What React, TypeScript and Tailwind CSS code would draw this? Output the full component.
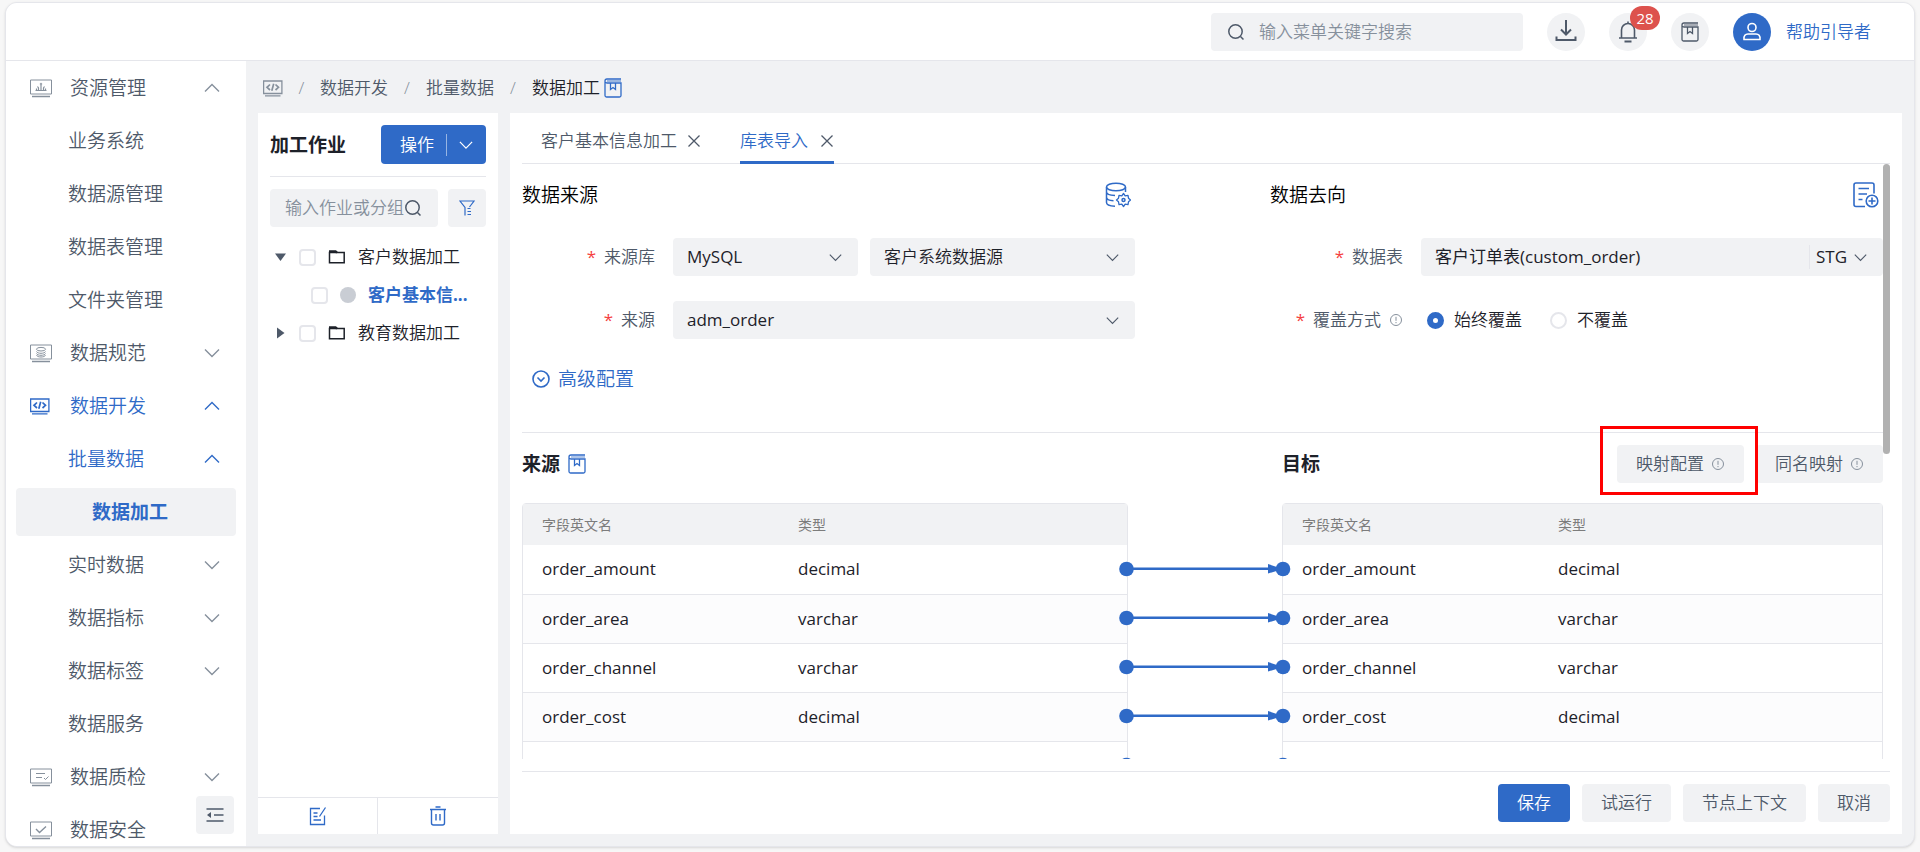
import type { ReactNode } from 'react';

const sidebarItems: {
  label: string;
  level: 1 | 2 | 3;
  icon?: ReactNode;
  arrow?: 'up' | 'down';
  active?: boolean;
}[] = [
  { label: '资源管理', level: 1, icon: <ResourceIcon />, arrow: 'up' },
  { label: '业务系统', level: 2 },
  { label: '数据源管理', level: 2 },
  { label: '数据表管理', level: 2 },
  { label: '文件夹管理', level: 2 },
  { label: '数据规范', level: 1, icon: <StandardIcon />, arrow: 'down' },
  { label: '数据开发', level: 1, icon: <CodeIcon />, arrow: 'up', active: true },
  { label: '批量数据', level: 2, arrow: 'up', active: true },
  { label: '数据加工', level: 3, active: true },
  { label: '实时数据', level: 2, arrow: 'down' },
  { label: '数据指标', level: 2, arrow: 'down' },
  { label: '数据标签', level: 2, arrow: 'down' },
  { label: '数据服务', level: 2 },
  { label: '数据质检', level: 1, icon: <QualityIcon />, arrow: 'down' },
  { label: '数据安全', level: 1, icon: <SecurityIcon /> },
];

const fields = [
  { name: 'order_amount', type: 'decimal' },
  { name: 'order_area', type: 'varchar' },
  { name: 'order_channel', type: 'varchar' },
  { name: 'order_cost', type: 'decimal' },
  { name: 'order_date', type: 'date' },
];

const levelPadding = { 1: 'pl-[14px]', 2: 'pl-[52px]', 3: 'pl-[76px]' };

function Monitor({ children }: { children: ReactNode }) {
  return (
    <svg width="22" height="19" viewBox="0 0 22 19" fill="none" stroke="currentColor" className="block">
      <path d="M.5 1h21v14H.5z" />
      <path d="M2 17.5h18" strokeWidth="1.5" />
      {children}
    </svg>
  );
}

function ResourceIcon() {
  return (
    <Monitor>
      <path d="M5.5 11.500h11M11 11V6M8.500 11V9L7.500 7.500M13.500 11V9l1-1.500M6.500 11V9.500M15.500 11V9.500" strokeWidth="1.2" />
      <circle cx="11" cy="5" r=".8" />
    </Monitor>
  );
}

function StandardIcon() {
  return (
    <Monitor>
      <ellipse cx="11" cy="5.2" rx="4.5" ry="1.8" />
      <path d="M6.5 7.5c1 2.4 8 2.4 9 0M6.5 9.5c1 2.4 8 2.4 9 0M6.5 11.2c1 2.4 8 2.4 9 0" />
    </Monitor>
  );
}

function CodeIcon() {
  return (
    <svg width="20" height="17" viewBox="0 0 20 17" fill="none" stroke="currentColor" className="block">
      <path d="M.6 1h18.3v12.5H.6zM2 15.8h15.5" strokeWidth="1.3" />
      <path d="M7 4.5 4 7.3 7 10M12.5 4.5l3 2.8-3 2.7M10.7 3.8 8.8 10.8" strokeWidth="1.7" />
    </svg>
  );
}

function QualityIcon() {
  return (
    <Monitor>
      <path d="M6 5.5h9M6 9.5h6M14 10l1.5 1.5 3-3" />
    </Monitor>
  );
}

function SecurityIcon() {
  return (
    <Monitor>
      <path d="m6 8 3.5 3.5 6.5-6" strokeWidth="1.4" />
    </Monitor>
  );
}

function Chevron({ up, size = 16 }: { up?: boolean; size?: number }) {
  return (
    <svg width={size} height={size} viewBox="0 0 16 16" fill="none" stroke="currentColor" strokeWidth="1.4" className="pointer-events-none block shrink-0">
      <path d={up ? 'm1 11.5 7-7 7 7' : 'm1 4.5 7 7 7-7'} />
    </svg>
  );
}

function SearchIcon() {
  return (
    <svg width="18" height="18" viewBox="0 0 18 18" fill="none" stroke="currentColor" strokeWidth="1.5" className="block shrink-0">
      <circle cx="8.5" cy="8.5" r="6.7" />
      <path d="m13.5 13.5 3 3" />
    </svg>
  );
}

function BookIcon() {
  return (
    <svg width="18" height="20" viewBox="0 0 18 20" fill="none" stroke="currentColor" strokeWidth="1.3" className="block shrink-0">
      <path d="M17 1H3a2 2 0 0 0-2 2v14.5A1.5 1.5 0 0 0 2.5 19h13a1.5 1.5 0 0 0 1.5-1.5V5H3a2 2 0 0 1-1.5-1" />
      <path d="M3 3h14" opacity=".6" />
      <path d="M6.5 5v6.5L9 9.5l2.5 2V5" />
    </svg>
  );
}

function InfoIcon() {
  return (
    <svg width="14" height="14" viewBox="0 0 14 14" fill="none" stroke="currentColor" className="block shrink-0 text-[#86909c]">
      <circle cx="7" cy="7" r="5.5" />
      <path d="M7 3.8v4M7 9v1.2" />
    </svg>
  );
}

function CloseIcon() {
  return (
    <svg width="14" height="14" viewBox="0 0 14 14" fill="none" stroke="currentColor" strokeWidth="1.3" className="block">
      <path d="m1.5 1.5 11 11M12.5 1.5l-11 11" />
    </svg>
  );
}

function FolderIcon() {
  return (
    <svg width="18" height="16" viewBox="0 0 18 16" fill="none" stroke="currentColor" strokeWidth="1.5" className="block shrink-0">
      <path d="M1.5 3.5h14.7v10.3H1.5z" />
      <path d="M1 2.5h6.5L9 3.5" strokeWidth="2.4" />
    </svg>
  );
}

function RoundButton({ label, children }: { label: string; children: ReactNode }) {
  return (
    <button type="button" aria-label={label} className="relative flex size-[38px] items-center justify-center rounded-full bg-[#f1f2f4]">
      {children}
    </button>
  );
}

function Header() {
  return (
    <header className="flex h-[58px] shrink-0 items-center justify-end gap-6 border-b border-[#e5e6eb] bg-white pr-[43px]">
      <label className="flex h-[38px] w-[312px] items-center gap-[14px] rounded bg-[#f1f2f4] px-4">
        <SearchIcon />
        <input type="text" aria-label="菜单搜索" placeholder="输入菜单关键字搜索" className="min-w-0 flex-1 bg-transparent outline-none placeholder:text-[#86909c]" />
      </label>
      <RoundButton label="下载">
        <svg width="22" height="24" viewBox="0 0 22 24" fill="none" stroke="currentColor" strokeWidth="2">
          <path d="M11 0v14M6 9.5l5 5 5-5M1.5 16.5V20h19v-3.5" />
        </svg>
      </RoundButton>
      <RoundButton label="通知">
        <svg width="20" height="22" viewBox="0 0 20 22" fill="none" stroke="currentColor" strokeWidth="1.6">
          <path d="M1 17h18M3.5 17V9a6.5 6.5 0 0 1 13 0v8M10 2.5V.5" />
          <path d="M6.5 20.5h7" strokeWidth="2" />
        </svg>
        <span className="absolute -top-[7px] left-[21px] flex h-6 w-[30px] items-center justify-center rounded-full bg-[#dd524d] text-[15px] font-normal text-white">28</span>
      </RoundButton>
      <RoundButton label="收藏">
        <BookIcon />
      </RoundButton>
      <div className="flex items-center gap-[15px] text-[#2f6ac7]">
        <span className="flex size-[38px] items-center justify-center rounded-full bg-[#2f6ac7] text-white">
          <svg width="20" height="20" viewBox="0 0 20 20" fill="none" stroke="currentColor" strokeWidth="1.6">
            <circle cx="10" cy="5.5" r="4" />
            <path d="M2 17.5c-.5-4 1.5-5.500 4-5.500h8c2.500 0 4.500 1.500 4 5.500z" />
          </svg>
        </span>
        <a href="#user">帮助引导者</a>
      </div>
    </header>
  );
}

function Sidebar() {
  return (
    <aside className="relative w-60 shrink-0 overflow-hidden bg-white px-[10px] pt-[3px] text-[19px]">
      <nav className="flex flex-col gap-[5px]">
        {sidebarItems.map((item) => (
          <a
            key={item.label}
            href="#menu"
            className={`flex h-12 shrink-0 items-center rounded pr-4 ${levelPadding[item.level]} ${
              item.active ? 'text-[#2f6ac7]' : ''
            } ${item.level === 3 ? 'bg-[#f1f2f4] font-bold' : ''}`}
          >
            {item.icon && <span className={`w-10 ${item.active ? '' : 'text-[#86909c]'}`}>{item.icon}</span>}
            <span className="flex-1">{item.label}</span>
            {item.arrow && (
              <span className={item.active ? '' : 'text-[#86909c]'}>
                <Chevron up={item.arrow === 'up'} />
              </span>
            )}
          </a>
        ))}
      </nav>
      <button type="button" aria-label="收起菜单" className="absolute right-3 bottom-3 flex size-[38px] items-center justify-center rounded bg-[#f1f2f4]">
        <svg width="18" height="16" viewBox="0 0 18 16" fill="none" stroke="currentColor" strokeWidth="1.6">
          <path d="M.5 2h17M8 8h9.5M.5 14h17" />
          <path d="M5 5v6L1 8z" fill="currentColor" stroke="none" />
        </svg>
      </button>
    </aside>
  );
}

function Breadcrumb() {
  return (
    <nav aria-label="面包屑" className="flex h-[52px] shrink-0 items-center pt-[2px] pl-[5px]">
      <span className="text-[#86909c]">
        <CodeIcon />
      </span>
      <span className="w-[37px] text-center text-[#86909c]">/</span>
      <a href="#dev">数据开发</a>
      <span className="w-[38px] text-center text-[#86909c]">/</span>
      <a href="#batch">批量数据</a>
      <span className="w-[38px] text-center text-[#86909c]">/</span>
      <span className="text-[#1d2129]">数据加工</span>
      <span className="ml-1 text-[#2f6ac7]">
        <BookIcon />
      </span>
    </nav>
  );
}

function TreeCheckbox({ label }: { label: string }) {
  return (
    <input type="checkbox" aria-label={label} className="size-[17px] shrink-0 appearance-none rounded border-2 border-[#e5e6eb] bg-white" />
  );
}

function JobPanel() {
  return (
    <section className="flex w-60 shrink-0 flex-col bg-white">
      <div className="px-3 pt-3">
        <div className="flex items-center justify-between border-b border-[#e5e6eb] pb-3">
          <h2 className="text-[19px] font-bold text-[#1d2129]">加工作业</h2>
          <button type="button" className="flex h-[39px] w-[105px] items-center rounded bg-[#2f6ac7] pl-[19px] text-white">
            操作
            <span className="ml-3 h-[22px] w-px bg-white/50" />
            <span className="ml-3">
              <Chevron size={14} />
            </span>
          </button>
        </div>
        <div className="mt-3 flex gap-[10px]">
          <label className="flex h-[38px] w-[168px] items-center rounded bg-[#f1f2f4] pr-4 pl-[15px]">
            <input type="text" aria-label="作业搜索" placeholder="输入作业或分组" className="min-w-0 flex-1 bg-transparent outline-none placeholder:text-[#86909c]" />
            <SearchIcon />
          </label>
          <button type="button" aria-label="筛选" className="flex size-[38px] items-center justify-center rounded bg-[#f1f2f4] text-[#2f6ac7]">
            <svg width="16" height="16" viewBox="0 0 16 16" fill="none" stroke="currentColor" strokeWidth="1.2">
              <path d="M6 15.5V7.5L1 1h14l-4.5 6" />
              <path d="M8.5 8.5h3M8.5 11.5h3.5M8.5 14.5h3.5" />
            </svg>
          </button>
        </div>
      </div>
      <ul className="mt-[11px] flex-1 text-[#1d2129]">
        <li className="flex h-[38px] items-center pl-[17px]">
          <svg width="11" height="8" viewBox="0 0 11 8" className="fill-[#4e5969]">
            <path d="M0 .5h11L5.5 8z" />
          </svg>
          <span className="ml-[13px] flex items-center gap-3">
            <TreeCheckbox label="客户数据加工" />
            <FolderIcon />
            客户数据加工
          </span>
        </li>
        <li className="flex h-[38px] items-center gap-3 pl-[53px]">
          <TreeCheckbox label="客户基本信息加工" />
          <span className="size-4 rounded-full bg-[#c9cdd4]" />
          <span className="font-bold text-[#2f6ac7]">客户基本信...</span>
        </li>
        <li className="flex h-[38px] items-center pl-[17px]">
          <svg width="11" height="12" viewBox="0 0 11 12" className="fill-[#4e5969]">
            <path d="M2 .5v11L9.5 6z" />
          </svg>
          <span className="ml-[13px] flex items-center gap-3">
            <TreeCheckbox label="教育数据加工" />
            <FolderIcon />
            教育数据加工
          </span>
        </li>
      </ul>
      <div className="grid h-[37px] shrink-0 grid-cols-2 divide-x divide-[#e5e6eb] border-t border-[#e5e6eb] text-[#2f6ac7]">
        <button type="button" aria-label="编辑" className="flex items-center justify-center">
          <svg width="18" height="20" viewBox="0 0 18 20" fill="none" stroke="currentColor" strokeWidth="1.3">
            <path d="M11 2.5H1.5v16h14V9.5M4.5 7h4M4.5 10.5h4M4.5 14h7.5M16.5 1.5l-6 9" />
          </svg>
        </button>
        <button type="button" aria-label="删除" className="flex items-center justify-center">
          <svg width="18" height="20" viewBox="0 0 18 20" fill="none" stroke="currentColor" strokeWidth="1.4">
            <path d="M1 3.5h16M6.5 1h5M2.5 3.5V17a2 2 0 0 0 2 2h9a2 2 0 0 0 2-2V3.5M7 8v6.5M11 8v6.5" />
          </svg>
        </button>
      </div>
    </section>
  );
}

function Select({ id, value, className }: { id: string; value: string; className: string }) {
  return (
    <div className={`relative flex items-center ${className}`}>
      <select id={id} aria-label={value} className="h-[38px] w-full appearance-none rounded bg-[#f1f2f4] pr-9 pl-[14px] text-[#1d2129] outline-none">
        <option>{value}</option>
      </select>
      <span className="pointer-events-none absolute right-4">
        <Chevron size={13} />
      </span>
    </div>
  );
}

function FormLabel({ htmlFor, children }: { htmlFor: string; children: ReactNode }) {
  return (
    <label htmlFor={htmlFor} className="flex w-[151px] shrink-0 items-center justify-end gap-2 pr-[18px]">
      <span className="font-normal text-[#f53f3f]">*</span>
      {children}
    </label>
  );
}

function Tabs() {
  return (
    <div className="flex h-[51px] shrink-0 items-stretch gap-[35px] border-b border-[#e5e6eb] pl-[19px]">
      <div className="flex items-center gap-[10px] pt-[5px]">
        <button type="button">客户基本信息加工</button>
        <button type="button" aria-label="关闭客户基本信息加工" className="mr-1">
          <CloseIcon />
        </button>
      </div>
      <div className="-mb-px flex items-center gap-3 border-b-[3px] border-[#2f6ac7] pt-2">
        <button type="button" className="text-[#2f6ac7]">库表导入</button>
        <button type="button" aria-label="关闭库表导入">
          <CloseIcon />
        </button>
      </div>
    </div>
  );
}

function SourceForm() {
  return (
    <div>
      <div className="flex h-[62px] items-center justify-between pr-1">
        <h3 className="text-[19px] text-black">数据来源</h3>
        <button type="button" aria-label="数据源配置" className="text-[#2f6ac7]">
          <svg width="26" height="26" viewBox="0 0 26 26" fill="none" stroke="currentColor" strokeWidth="1.5">
            <ellipse cx="11" cy="5" rx="9.5" ry="3.8" />
            <path d="M1.5 5v15.5c0 2 3.5 3.5 8.5 3.7M20.5 5v5M1.5 10c0 1.8 3.5 3.3 8.5 3.5M1.5 15.2c0 1.8 3 3.3 7 3.5" />
            <path
              d="m18.5 11.5 1.7 2.3 2.8-.4.5 2.8 2 1.8-2 1.8-.5 2.8-2.8-.4-1.7 2.300-1.7-2.300-2.8.4-.5-2.800-2-1.800 2-1.800.5-2.800 2.800.4z"
              strokeLinejoin="round"
              strokeWidth="1.3"
            />
            <circle cx="18.5" cy="18" r="1.5" />
          </svg>
        </button>
      </div>
      <div className="mt-3 flex flex-col gap-[25px]">
        <div className="flex">
          <FormLabel htmlFor="source-db">来源库</FormLabel>
          <Select id="source-db" value="MySQL" className="mr-3 w-[185px] font-normal" />
          <Select id="source-name" value="客户系统数据源" className="flex-1" />
        </div>
        <div className="flex">
          <FormLabel htmlFor="source-table">来源</FormLabel>
          <Select id="source-table" value="adm_order" className="flex-1 font-normal" />
        </div>
      </div>
      <button type="button" className="mt-7 ml-[10px] flex items-center gap-2 text-[19px] text-[#2f6ac7]">
        <svg width="18" height="18" viewBox="0 0 18 18" fill="none" stroke="currentColor" strokeWidth="1.6">
          <circle cx="9" cy="9" r="8" />
          <path d="m5.5 7.5 3.5 3.5 3.5-3.5" />
        </svg>
        高级配置
      </button>
    </div>
  );
}

function TargetForm() {
  return (
    <div>
      <div className="flex h-[62px] items-center justify-between pr-1">
        <h3 className="text-[19px] text-black">数据去向</h3>
        <button type="button" aria-label="新建数据表" className="text-[#2f6ac7]">
          <svg width="26" height="26" viewBox="0 0 26 26" fill="none" stroke="currentColor" strokeWidth="1.6">
            <path d="M21 11.5V3a2 2 0 0 0-2-2H3a2 2 0 0 0-2 2v19.5a2 2 0 0 0 2 2h9M5.5 6.5h10.5M5.5 12h8.5M5.5 17.5h4" />
            <circle cx="19" cy="19" r="5.8" />
            <path d="M19 15.5v7M15.5 19h7" />
          </svg>
        </button>
      </div>
      <div className="mt-3 flex flex-col gap-[25px]">
        <div className="flex">
          <FormLabel htmlFor="target-table">数据表</FormLabel>
          <div className="flex h-[38px] flex-1 items-center rounded bg-[#f1f2f4] font-normal text-[#1d2129]">
            <input id="target-table" type="text" defaultValue="客户订单表(custom_order)" className="min-w-0 flex-1 bg-transparent pl-[14px] outline-none" />
            <div className="relative flex w-[74px] items-center border-l border-[#e5e6eb]">
              <select aria-label="数据分层" className="w-full appearance-none bg-transparent pl-[6px] outline-none">
                <option>STG</option>
              </select>
              <span className="pointer-events-none absolute right-4 text-[#4e5969]">
                <Chevron size={13} />
              </span>
            </div>
          </div>
        </div>
        <div className="flex h-[38px]">
          <FormLabel htmlFor="cover-always">
            覆盖方式
            <InfoIcon />
          </FormLabel>
          <div className="flex items-center gap-7 pl-[6px] text-[#1d2129]">
            <label className="flex items-center gap-[10px]">
              <input id="cover-always" type="radio" name="cover" defaultChecked className="size-[17px] appearance-none rounded-full border-2 border-[#e5e6eb] bg-white checked:border-[6px] checked:border-[#2f6ac7]" />
              始终覆盖
            </label>
            <label className="flex items-center gap-[10px]">
              <input type="radio" name="cover" className="size-[17px] appearance-none rounded-full border-2 border-[#e5e6eb] bg-white checked:border-[6px] checked:border-[#2f6ac7]" />
              不覆盖
            </label>
          </div>
        </div>
      </div>
    </div>
  );
}

function FieldTable() {
  return (
    <div className="rounded-t border border-[#e5e6eb]">
      <table className="w-full table-fixed text-left font-normal text-[#1d2129]">
        <thead>
          <tr className="h-[41px] bg-[#f1f2f4] text-sm text-[#7c7c7c]">
            <th className="w-[256px] pl-[19px] font-normal">字段英文名</th>
            <th className="pl-[19px] font-normal">类型</th>
          </tr>
        </thead>
        <tbody>
          {fields.map((field) => (
            <tr key={field.name} className="h-[49px] border-b border-[#e5e6eb] even:bg-[#fcfcfd]">
              <td className="pl-[19px]">{field.name}</td>
              <td className="pl-[19px]">{field.type}</td>
            </tr>
          ))}
        </tbody>
      </table>
    </div>
  );
}

function MappingLines() {
  return (
    <div className="z-10 -mx-[9px] flex flex-col pt-[42px]">
      {fields.map((field) => (
        <svg key={field.name} width="172" height="49" viewBox="0 0 172 49" className="block fill-[#2f6ac7]">
          <path d="M7 22.5h146V25H7z" />
          <path d="m149 19 15 5-15 4.5z" />
          <circle cx="7.5" cy="24" r="7.3" />
          <circle cx="164" cy="24" r="7.3" />
        </svg>
      ))}
    </div>
  );
}

function MappingButton({ children }: { children: ReactNode }) {
  return (
    <button type="button" className="flex h-[38px] items-center gap-[7px] rounded bg-[#f1f2f4] px-[19px]">
      {children}
      <InfoIcon />
    </button>
  );
}

function Mapping() {
  return (
    <div className="mt-[41px] grid grid-cols-[606fr_154px_601fr] border-t border-[#e5e6eb]">
      <div className="flex h-[70px] items-center gap-2 pb-2">
        <h3 className="text-[19px] font-bold text-[#1d2129]">来源</h3>
        <span className="text-[#2f6ac7]">
          <BookIcon />
        </span>
      </div>
      <div className="col-start-3 flex h-[70px] items-center gap-3 pb-2">
        <h3 className="flex-1 text-[19px] font-bold text-[#1d2129]">目标</h3>
        <div className="relative">
          <MappingButton>映射配置</MappingButton>
          <div className="pointer-events-none absolute -top-[19px] -right-[14px] -bottom-[12px] -left-[17px] border-[3px] border-[#ff0000]" />
        </div>
        <MappingButton>同名映射</MappingButton>
      </div>
      <FieldTable />
      <MappingLines />
      <FieldTable />
    </div>
  );
}

function ActionBar() {
  return (
    <footer className="mt-3 flex shrink-0 justify-end gap-3 border-t border-[#e5e6eb] py-3">
      <button type="button" className="h-[38px] rounded bg-[#2f6ac7] px-[19px] text-white">保存</button>
      <button type="button" className="h-[38px] rounded bg-[#f1f2f4] px-[19px]">试运行</button>
      <button type="button" className="h-[38px] rounded bg-[#f1f2f4] px-[19px]">节点上下文</button>
      <button type="button" className="h-[38px] rounded bg-[#f1f2f4] px-[19px]">取消</button>
    </footer>
  );
}

function Workspace() {
  return (
    <section className="flex min-w-0 flex-1 flex-col bg-white px-3">
      <Tabs />
      <div className="flex min-h-0 flex-1 overflow-hidden">
        <div className="min-w-0 flex-1">
          <div className="grid grid-cols-2 gap-x-[135px]">
            <SourceForm />
            <TargetForm />
          </div>
          <Mapping />
        </div>
        <div className="h-[290px] w-[7px] rounded-full bg-[#b1b1b1]" />
      </div>
      <ActionBar />
    </section>
  );
}

export default function App() {
  return (
    <div className="h-screen bg-[#f7f7f7] px-[5px] pt-[2px] pb-[5px] font-['Open_Sans','Noto_Sans_CJK_SC',sans-serif] text-[17px] leading-6 font-[350] text-[#4e5969]">
      <div className="flex h-full flex-col overflow-hidden rounded-xl border border-[#e5e6eb] bg-[#f1f2f4] shadow-sm">
        <Header />
        <div className="flex min-h-0 flex-1">
          <Sidebar />
          <main className="flex min-w-0 flex-1 flex-col px-3 pb-3">
            <Breadcrumb />
            <div className="flex min-h-0 flex-1 gap-3">
              <JobPanel />
              <Workspace />
            </div>
          </main>
        </div>
      </div>
    </div>
  );
}
